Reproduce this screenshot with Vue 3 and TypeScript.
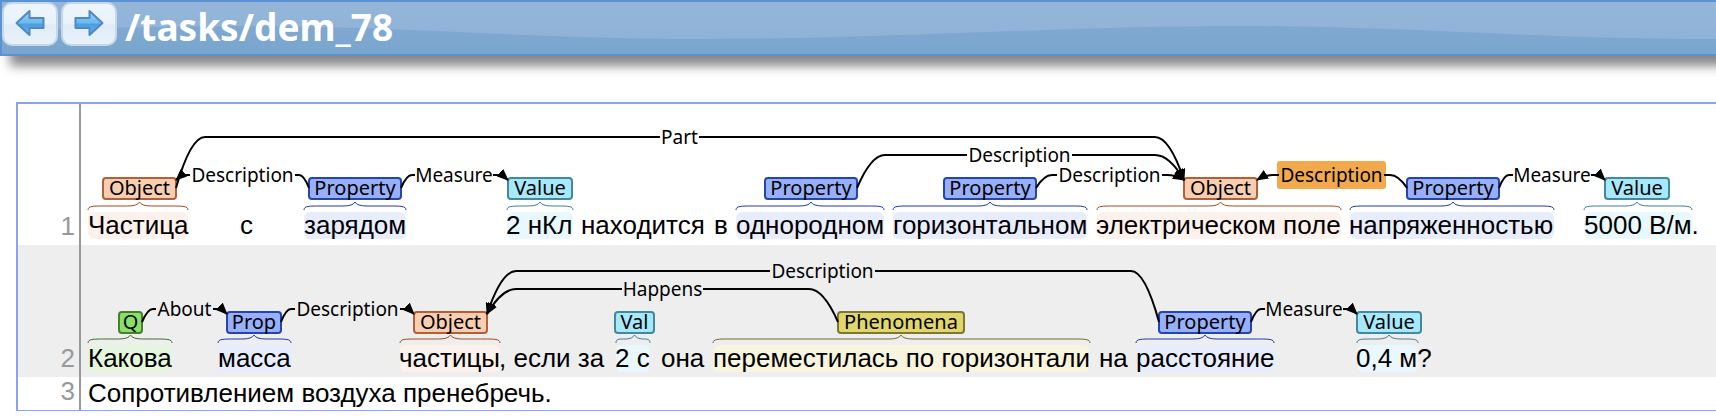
<script setup lang="ts">
type Kind = 'object' | 'property' | 'value' | 'question' | 'phenomena'

interface Word {
  text: string
  x: number
}

interface Span {
  kind: Kind
  label: string
  x: number
  width: number
  from: number
  to: number
}

interface Arc {
  label: string
  y: number
  left: number
  leftShoulder: number
  gapStart: number
  gapEnd: number
  rightShoulder: number
  right: number
  head: 'left' | 'right'
  selected?: boolean
}

interface Sentence {
  id: number
  height: number
  boxTop: number
  baseline: number
  words: Word[]
  spans: Span[]
  arcs: Arc[]
}

// Horizontal positions are measured from the left edge of the text column.
const sentences: Sentence[] = [
  {
    id: 1,
    height: 141,
    boxTop: 74,
    baseline: 130,
    words: [
      { text: 'Частица', x: 7 },
      { text: 'с', x: 159 },
      { text: 'зарядом', x: 223 },
      { text: '2 нКл', x: 425 },
      { text: 'находится', x: 500 },
      { text: 'в', x: 633 },
      { text: 'однородном', x: 655 },
      { text: 'горизонтальном', x: 812 },
      { text: 'электрическом поле', x: 1015 },
      { text: 'напряженностью', x: 1268 },
      { text: '5000 В/м.', x: 1503 },
    ],
    spans: [
      { kind: 'object', label: 'Object', x: 22, width: 73, from: 7, to: 107 },
      { kind: 'property', label: 'Property', x: 228, width: 92, from: 223, to: 325 },
      { kind: 'value', label: 'Value', x: 427, width: 64, from: 426, to: 492 },
      { kind: 'property', label: 'Property', x: 684, width: 92, from: 655, to: 803 },
      { kind: 'property', label: 'Property', x: 863, width: 92, from: 812, to: 1006 },
      { kind: 'object', label: 'Object', x: 1103, width: 73, from: 1016, to: 1260 },
      { kind: 'property', label: 'Property', x: 1326, width: 92, from: 1269, to: 1473 },
      { kind: 'value', label: 'Value', x: 1524, width: 64, from: 1503, to: 1611 },
    ],
    arcs: [
      { label: 'Part', y: 33, left: 95, leftShoulder: 124, gapStart: 579, gapEnd: 618, rightShoulder: 1074, right: 1103, head: 'right' },
      { label: 'Description', y: 51, left: 776, leftShoulder: 804, gapStart: 886, gapEnd: 991, rightShoulder: 1074, right: 1103, head: 'right' },
      { label: 'Description', y: 71, left: 95, leftShoulder: 106, gapStart: 109, gapEnd: 214, rightShoulder: 218, right: 228, head: 'left' },
      { label: 'Measure', y: 71, left: 320, leftShoulder: 331, gapStart: 334, gapEnd: 412, rightShoulder: 416, right: 427, head: 'right' },
      { label: 'Description', y: 71, left: 955, leftShoulder: 971, gapStart: 976, gapEnd: 1081, rightShoulder: 1086, right: 1103, head: 'right' },
      { label: 'Description', y: 71, left: 1176, leftShoulder: 1192, gapStart: 1198, gapEnd: 1303, rightShoulder: 1309, right: 1326, head: 'left', selected: true },
      { label: 'Measure', y: 71, left: 1418, leftShoulder: 1428, gapStart: 1432, gapEnd: 1510, rightShoulder: 1514, right: 1524, head: 'right' },
    ],
  },
  {
    id: 2,
    height: 132,
    boxTop: 67,
    baseline: 122,
    words: [
      { text: 'Какова', x: 7 },
      { text: 'масса', x: 137 },
      { text: 'частицы', x: 318 },
      { text: ', если за', x: 418 },
      { text: '2 с', x: 534 },
      { text: 'она', x: 580 },
      { text: 'переместилась по горизонтали', x: 632 },
      { text: 'на', x: 1018 },
      { text: 'расстояние', x: 1055 },
      { text: '0,4 м?', x: 1275 },
    ],
    spans: [
      { kind: 'question', label: 'Q', x: 38, width: 23, from: 7, to: 91 },
      { kind: 'property', label: 'Prop', x: 146, width: 54, from: 137, to: 210 },
      { kind: 'object', label: 'Object', x: 333, width: 73, from: 319, to: 419 },
      { kind: 'value', label: 'Val', x: 534, width: 39, from: 535, to: 569 },
      { kind: 'phenomena', label: 'Phenomena', x: 757, width: 126, from: 632, to: 1009 },
      { kind: 'property', label: 'Property', x: 1078, width: 92, from: 1055, to: 1193 },
      { kind: 'value', label: 'Value', x: 1276, width: 64, from: 1276, to: 1337 },
    ],
    arcs: [
      { label: 'Description', y: 26, left: 406, leftShoulder: 435, gapStart: 689, gapEnd: 794, rightShoulder: 1050, right: 1078, head: 'left' },
      { label: 'Happens', y: 44, left: 406, leftShoulder: 435, gapStart: 541, gapEnd: 622, rightShoulder: 728, right: 757, head: 'left' },
      { label: 'About', y: 64, left: 61, leftShoulder: 72, gapStart: 75, gapEnd: 132, rightShoulder: 136, right: 146, head: 'right' },
      { label: 'Description', y: 64, left: 200, leftShoulder: 210, gapStart: 214, gapEnd: 319, rightShoulder: 323, right: 333, head: 'right' },
      { label: 'Measure', y: 64, left: 1170, leftShoulder: 1180, gapStart: 1184, gapEnd: 1262, rightShoulder: 1266, right: 1276, head: 'right' },
    ],
  },
  {
    id: 3,
    height: 33,
    boxTop: 0,
    baseline: 25,
    words: [{ text: 'Сопротивлением воздуха пренебречь.', x: 7 }],
    spans: [],
    arcs: [],
  },
]

function side(arc: Arc, which: 'left' | 'right', boxTop: number): string {
  const x = which === 'left' ? arc.left : arc.right
  const shoulder = which === 'left' ? arc.leftShoulder : arc.rightShoulder
  const gap = which === 'left' ? arc.gapStart : arc.gapEnd
  const y = boxTop + (arc.head === which ? 2 : 10)
  return `M${gap} ${arc.y} H${shoulder} Q${(x + shoulder) / 2} ${arc.y} ${x} ${y}`
}

function brace(span: Span, baseline: number): string {
  const middle = span.x + span.width / 2
  const low = baseline - 24
  const line = baseline - 28
  const tip = baseline - 32
  const half = Math.min(middle - span.from, span.to - middle)
  const curl = Math.min(16, half / 2)
  const rise = Math.min(12, half / 2)
  return (
    `M${span.from} ${low} C${span.from} ${line} ${span.from + curl / 3} ${line} ${span.from + curl} ${line} ` +
    `H${middle - rise} Q${middle - 2} ${line} ${middle} ${tip} ` +
    `Q${middle + 2} ${line} ${middle + rise} ${line} H${span.to - curl} ` +
    `C${span.to - curl / 3} ${line} ${span.to} ${line} ${span.to} ${low}`
  )
}
</script>

<template>
  <div class="page">
    <header class="bar">
      <svg class="wave" viewBox="0 0 1712 52" preserveAspectRatio="none" aria-hidden="true">
        <defs>
          <linearGradient id="deep" x1="0" y1="0" x2="0" y2="1">
            <stop offset="0" stop-color="#80a9d2" />
            <stop offset="1" stop-color="#79a5cd" />
          </linearGradient>
        </defs>
        <path
          fill="url(#deep)"
          d="M0 30 C80 26 160 24 240 24 C400 24 530 37 700 37 C890 37 1050 24 1240 24 C1400 24 1530 37 1712 37 V52 H0 Z"
        />
      </svg>
      <nav class="nav" aria-label="Documents">
        <button class="step" type="button" aria-label="Previous document">
          <svg width="30" height="28" viewBox="0 0 30 28" aria-hidden="true">
            <defs>
              <linearGradient id="arrow-fill" x1="0" y1="0" x2="0" y2="1">
                <stop offset="0" stop-color="#9ad4f6" />
                <stop offset="0.5" stop-color="#6cb8ee" />
                <stop offset="0.55" stop-color="#4a9fe2" />
                <stop offset="1" stop-color="#63b4ee" />
              </linearGradient>
            </defs>
            <path class="arrow" d="M1.500 14 L14.500 2 V9 H28.500 V19 H14.500 V26 Z" />
          </svg>
        </button>
        <button class="step" type="button" aria-label="Next document">
          <svg width="30" height="28" viewBox="0 0 30 28" aria-hidden="true">
            <path class="arrow" d="M28.500 14 L15.500 2 V9 H1.500 V19 H15.500 V26 Z" />
          </svg>
        </button>
      </nav>
      <h1 class="title">/tasks/dem_78</h1>
    </header>

    <main class="document">
      <section v-for="s in sentences" :key="s.id" class="sentence">
        <div class="number">{{ s.id }}</div>
        <svg class="canvas" :height="s.height">
          <defs>
            <marker :id="`head-${s.id}`" markerUnits="userSpaceOnUse" markerWidth="12" markerHeight="10" refX="11" refY="5" orient="auto">
              <path d="M0 0 L12 5 L0 10 Z" />
            </marker>
          </defs>
          <g v-for="span in s.spans" :key="span.x" :class="span.kind">
            <rect class="mark" :x="span.from" :y="s.baseline - 22" :width="span.to - span.from" height="27" rx="6" />
            <path class="brace" :d="brace(span, s.baseline)" />
            <rect class="box" :x="span.x" :y="s.boxTop" :width="span.width" height="21" rx="3" />
            <text class="label" :x="span.x + span.width / 2" :y="s.boxTop + 17">{{ span.label }}</text>
          </g>
          <g v-for="arc in s.arcs" :key="`${arc.gapStart}-${arc.y}`">
            <rect v-if="arc.selected" class="selection" :x="arc.gapStart - 2" :y="arc.y - 14" :width="arc.gapEnd - arc.gapStart + 4" height="28" rx="3" />
            <path class="arc" :d="side(arc, 'left', s.boxTop)" :marker-end="arc.head === 'left' ? `url(#head-${s.id})` : undefined" />
            <path class="arc" :d="side(arc, 'right', s.boxTop)" :marker-end="arc.head === 'right' ? `url(#head-${s.id})` : undefined" />
            <text class="relation" :x="(arc.gapStart + arc.gapEnd) / 2" :y="arc.y + 7">{{ arc.label }}</text>
          </g>
          <text v-for="word in s.words" :key="word.x" class="word" :x="word.x" :y="s.baseline">{{ word.text }}</text>
        </svg>
      </section>
    </main>
  </div>
</template>

<style>
body {
  margin: 0;
  background: #fff;
}
</style>

<style scoped>
.page {
  overflow: hidden;
  padding-bottom: 5px;
  font-family: 'Liberation Sans', Arial, sans-serif;
}

.bar {
  position: relative;
  display: flex;
  align-items: flex-start;
  gap: 8px;
  box-sizing: border-box;
  height: 56px;
  border: 2px solid #5a93d5;
  border-right: 0;
  background: linear-gradient(#95b6d9, #8cb1d6);
  box-shadow: 10px 10px 10px #888;
}

.wave {
  position: absolute;
  inset: 0;
  width: 100%;
  height: 100%;
}

.nav {
  position: relative;
  display: flex;
  gap: 3px;
}

.step {
  display: flex;
  align-items: center;
  justify-content: center;
  box-sizing: border-box;
  width: 56px;
  height: 44px;
  padding: 0 0 2px;
  border: 2px solid #c5d8ea;
  border-radius: 10px;
  background: linear-gradient(#edf4fc 0%, #e9f2fb 50%, #e0ebf6 52%, #e8f2fb 100%);
}

.arrow {
  fill: url(#arrow-fill);
  stroke: #5187c4;
  stroke-width: 2;
  stroke-linejoin: round;
}

.title {
  position: relative;
  margin: 0;
  color: #fff;
  font: bold 37px/50px 'Noto Sans', sans-serif;
}

.document {
  margin: 46px 0 0 16px;
  border: solid #88a3f5;
  border-width: 2px 0 1px 2px;
}

.sentence {
  display: flex;
}

.sentence:nth-child(even) {
  background: #eee;
}

.number {
  display: flex;
  align-items: flex-end;
  justify-content: flex-end;
  box-sizing: border-box;
  flex: 0 0 63px;
  padding: 0 4px 5px 0;
  border-right: 2px solid #999;
  color: #999;
  font-size: 26px;
  line-height: 28px;
}

.canvas {
  display: block;
  flex: 1;
  min-width: 0;
}

.word {
  font-size: 26px;
}

.label,
.relation {
  font-family: 'Noto Sans', sans-serif;
  text-anchor: middle;
}

.label {
  font-size: 20px;
}

.relation {
  font-size: 19px;
}

.arc {
  fill: none;
  stroke: #000;
  stroke-width: 2;
}

.selection {
  fill: #f2a94b;
}

.box {
  stroke-width: 2;
}

.brace {
  fill: none;
  stroke-width: 1;
}

.object .box {
  fill: #f8ceb0;
  stroke: #b3603a;
}

.object .brace {
  stroke: #a34b1e;
}

.object .mark {
  fill: #fdf1ec;
}

.property .box {
  fill: #97b0fb;
  stroke: #2743ad;
}

.property .brace {
  stroke: #1f3aa5;
}

.property .mark {
  fill: #e8edfe;
}

.value .box {
  fill: #a5e9fb;
  stroke: #4488a0;
}

.value .brace {
  stroke: #3d8099;
}

.value .mark {
  fill: #e9f7fe;
}

.question .box {
  fill: #88e068;
  stroke: #44802f;
}

.question .brace {
  stroke: #3d702d;
}

.question .mark {
  fill: #e4f7de;
}

.phenomena .box {
  fill: #e0d66b;
  stroke: #7d7734;
}

.phenomena .brace {
  stroke: #736c2c;
}

.phenomena .mark {
  fill: #f8f5de;
}
</style>
